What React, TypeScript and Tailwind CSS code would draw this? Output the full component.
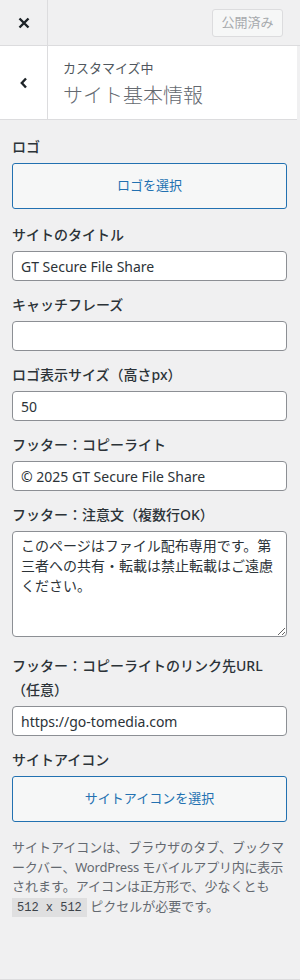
import React from "react";

const font = "font-['Noto_Sans','Noto_Sans_CJK_JP',sans-serif]";

function Label({ children }: { children: React.ReactNode }) {
  return (
    <div className="text-[14px] leading-[24px] font-medium text-[#2c3338] mb-[4px]">
      {children}
    </div>
  );
}

function TextInput({ value }: { value: string }) {
  return (
    <input
      type="text"
      defaultValue={value}
      className="block w-full h-[30px] px-[8px] text-[14px] text-[#2c3338] bg-white border border-[#8c8f94] rounded-[4px] outline-none"
    />
  );
}

function SelectButton({ children }: { children: React.ReactNode }) {
  return (
    <button className="block w-full h-[46px] text-[13px] text-[#2271b1] bg-[#f6f7f7] border border-[#2271b1] rounded-[3px]">
      {children}
    </button>
  );
}

export default function App() {
  return (
    <div className={`w-[300px] h-[980px] bg-[#f0f0f1] border-b border-[#dcdcde] ${font}`}>
      {/* top bar */}
      <div className="flex h-[46px] border-b border-[#dcdcde]">
        <div className="w-[48px] border-r border-[#dcdcde] flex items-center justify-center">
          <svg width="12" height="12" viewBox="0 0 12 12">
            <path d="M1.5 1.5 L10.5 10.5 M10.5 1.5 L1.5 10.5" stroke="#1d2327" strokeWidth="2.4" strokeLinecap="butt" />
          </svg>
        </div>
        <div className="flex-1 flex items-center justify-end pr-[17px]">
          <button className="h-[28px] w-[71px] text-[13px] text-[#a7aaad] bg-[#f6f7f7] border border-[#dcdcde] rounded-[3px]">
            公開済み
          </button>
        </div>
      </div>

      {/* section header */}
      <div className="flex h-[74px] w-[297px] bg-white border-b border-[#dcdcde]">
        <div className="w-[48px] border-r border-[#dcdcde] flex items-center justify-center">
          <svg width="10" height="12" viewBox="0 0 10 12">
            <path d="M7 1.5 L2.8 6 L7 10.5" stroke="#1d2327" strokeWidth="2.4" fill="none" />
          </svg>
        </div>
        <div className="pl-[15px] pt-[12px]">
          <div className="text-[13px] leading-[20px] text-[#50575e]">カスタマイズ中</div>
          <div className="text-[20px] leading-[28px] mt-[4px] text-[#646970] font-light">サイト基本情報</div>
        </div>
      </div>

      {/* content */}
      <div className="w-[297px] pl-[12px] pr-[10px] pt-[15px]">
        <div className="mb-[14px]">
          <Label>ロゴ</Label>
          <SelectButton>ロゴを選択</SelectButton>
        </div>

        <div className="mb-[12px]">
          <Label>サイトのタイトル</Label>
          <TextInput value="GT Secure File Share" />
        </div>

        <div className="mb-[12px]">
          <Label>キャッチフレーズ</Label>
          <TextInput value="" />
        </div>

        <div className="mb-[12px]">
          <Label>ロゴ表示サイズ（高さpx）</Label>
          <TextInput value="50" />
        </div>

        <div className="mb-[12px]">
          <Label>フッター：コピーライト</Label>
          <TextInput value="© 2025 GT Secure File Share" />
        </div>

        <div className="mb-[17px]">
          <Label>フッター：注意文（複数行OK）</Label>
          <textarea
            defaultValue="このページはファイル配布専用です。第三者への共有・転載は禁止転載はご遠慮ください。"
            className="block w-full h-[106px] px-[8px] pt-[4px] pb-[2px] text-[14px] leading-[20px] text-[#2c3338] bg-white border border-[#8c8f94] rounded-[4px] outline-none resize-y"
          />
        </div>

        <div className="mb-[12px]">
          <Label>
            フッター：コピーライトのリンク先URL
            <br />
            （任意）
          </Label>
          <TextInput value="https://go-tomedia.com" />
        </div>

        <div>
          <Label>サイトアイコン</Label>
          <SelectButton>サイトアイコンを選択</SelectButton>
        </div>

        <div className="mt-[16px] text-[13px] leading-[19.5px] text-[#646970] whitespace-nowrap">
          <div>サイトアイコンは、ブラウザのタブ、ブックマ</div>
          <div className="tracking-[-0.2px]">ークバー、WordPress モバイルアプリ内に表示</div>
          <div>されます。アイコンは正方形で、少なくとも</div>
          <div>
            <code className="font-['Liberation_Mono',monospace] text-[12px] bg-[rgba(0,0,0,0.07)] pt-[3px] pb-[2px] px-[5px] text-[#3c434a]">
              512 x 512
            </code>{" "}
            ピクセルが必要です。
          </div>
        </div>
      </div>
    </div>
  );
}
